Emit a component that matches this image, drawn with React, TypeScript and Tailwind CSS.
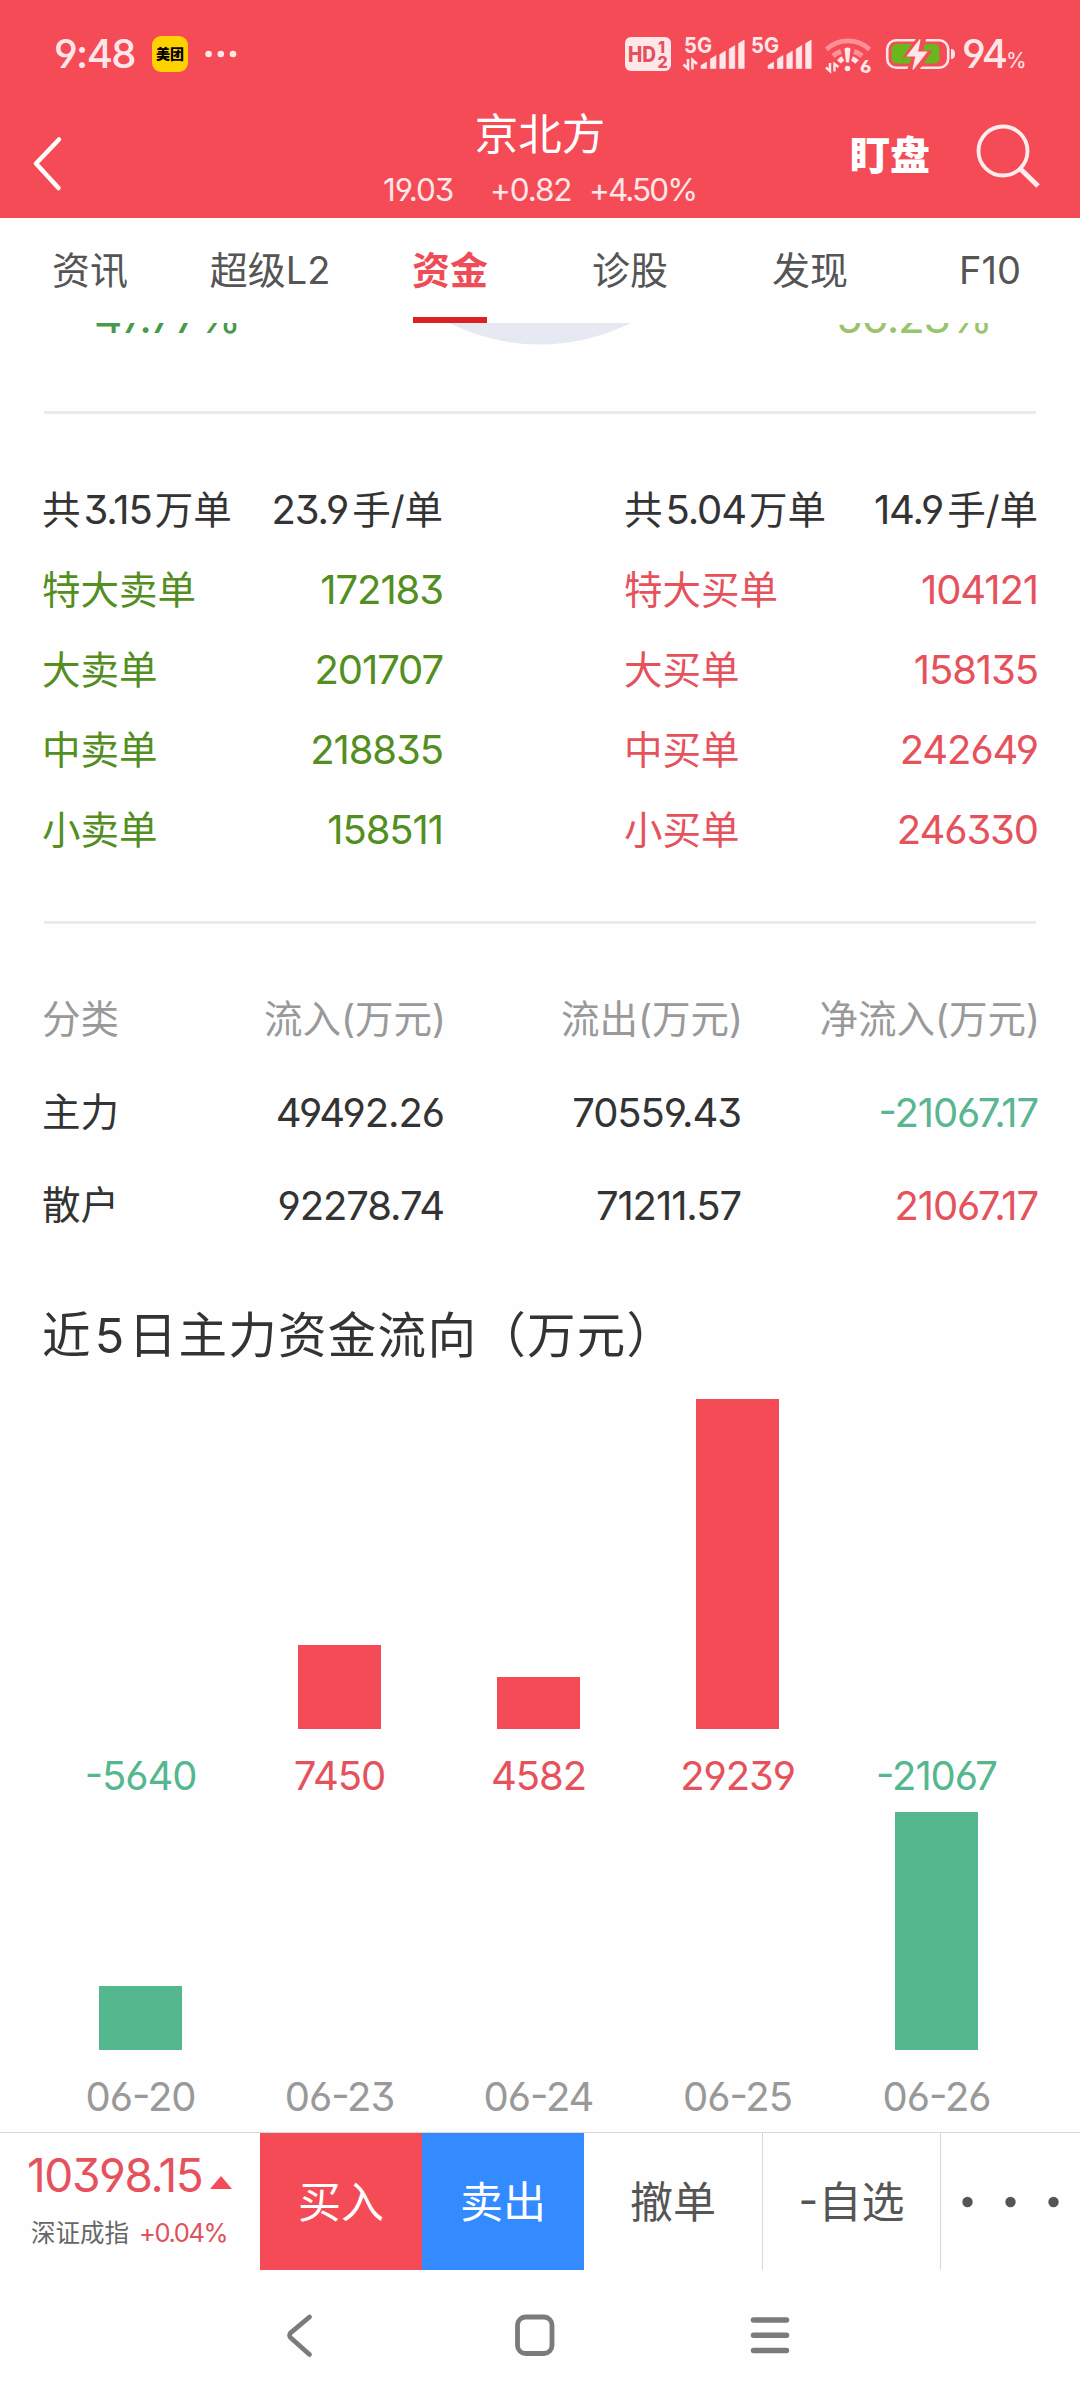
import { clsx } from 'clsx';

const TABS = ['资讯', '超级L2', '资金', '诊股', '发现', 'F10'];

const SELL_ORDERS = [
    { label: '特大卖单', value: '172183' },
    { label: '大卖单', value: '201707' },
    { label: '中卖单', value: '218835' },
    { label: '小卖单', value: '158511' },
];

const BUY_ORDERS = [
    { label: '特大买单', value: '104121' },
    { label: '大买单', value: '158135' },
    { label: '中买单', value: '242649' },
    { label: '小买单', value: '246330' },
];

const FLOW_ROWS = [
    { name: '主力', inflow: '49492.26', outflow: '70559.43', net: '-21067.17' },
    { name: '散户', inflow: '92278.74', outflow: '71211.57', net: '21067.17' },
];

const DAYS = [
    { date: '06-20', value: -5640 },
    { date: '06-23', value: 7450 },
    { date: '06-24', value: 4582 },
    { date: '06-25', value: 29239 },
    { date: '06-26', value: -21067 },
];

// Bar height in pixels per 万元
const BAR_SCALE = 330 / 29239;

function SignalBars({ x }: { x: number }) {
    const heights = [6.5, 13, 17.5, 23, 28.5];
    return (
        <g>
            {heights.map((h, i) => (
                <path
                    key={i}
                    d={`M${x + i * 9.4} 68.5v${-h + 3.5}l5.6 -3.5v${h}z`}
                    stroke="#ffe6e8"
                    strokeWidth="0.6"
                    strokeLinejoin="round"
                />
            ))}
        </g>
    );
}

function StatusBar() {
    return (
        <div className="flex h-[108px] items-center text-[#ffe6e8]">
            <span className="ml-[54px] w-[98px] text-[40px] font-medium leading-none tracking-[-0.04em]">9:48</span>
            <span className="flex h-9 w-9 items-center justify-center rounded-[9px] bg-[#ffd100] text-[14px] font-black leading-none text-black">
                美团
            </span>
            <svg className="ml-[16px]" width="34" height="10" fill="#ffe6e8">
                <circle cx="4.6" cy="5" r="3.3" />
                <circle cx="16.8" cy="5" r="3.3" />
                <circle cx="29" cy="5" r="3.3" />
            </svg>
            <svg className="ml-auto" width="338" height="108" viewBox="620 0 338 108" fill="#ffe6e8">
                <rect x="625" y="37" width="46" height="34" rx="6" />
                <g fill="#e4505b" fontWeight="800">
                    <text x="628" y="61.5" fontSize="21" textLength="28" lengthAdjust="spacingAndGlyphs">HD</text>
                    <text x="658" y="53" fontSize="16">1</text>
                    <text x="657.5" y="67.5" fontSize="16">2</text>
                </g>
                <text x="684" y="52.5" fontSize="22" fontWeight="700" textLength="28" lengthAdjust="spacingAndGlyphs">5G</text>
                <path d="M688 59v9.5l-4.5 -4M692.5 69.5v-9.500l4.5 4" fill="none" stroke="#ffe6e8" strokeWidth="2.6" />
                <SignalBars x={701} />
                <text x="751" y="52.5" fontSize="22" fontWeight="700" textLength="28" lengthAdjust="spacingAndGlyphs">5G</text>
                <SignalBars x={768} />
                <g fill="none">
                    <path d="M826.5 49.5a31 31 0 0 1 43 0" stroke="#ff9097" strokeWidth="4.6" />
                    <path d="M833 56a22 22 0 0 1 8 -4.5M854 51.5a22 22 0 0 1 8 4.5" stroke="#ff9097" strokeWidth="5" />
                    <path d="M839 62a14 14 0 0 1 4 -3.5M852 58.5a14 14 0 0 1 5 3.5" stroke="#ffe6e8" strokeWidth="5" />
                    <path d="M830 63v8l-4 -3.5M834.5 71.5v-7.5l4 3" stroke="#ffe6e8" strokeWidth="2.4" />
                </g>
                <path d="M844.5 48.5q3 -2 6 0l-1.5 14h-3z" />
                <circle cx="847.5" cy="68.5" r="2.8" />
                <text x="860" y="72.5" fontSize="18" fontWeight="800">6</text>
                <rect x="887.2" y="40.2" width="61" height="27.5" rx="9" fill="none" stroke="#ffe6e8" strokeWidth="2.6" />
                <path d="M951 49q4 0 4 5t-4 5z" />
                <rect x="891.5" y="44" width="48" height="19.5" rx="5" fill="#68b71c" />
                <path d="M918 36L902.500 57.500h9.500l-5.500 13.500h12L932.500 50.500h-9.500l4 -14.500z" fill="#f54b56" />
                <path d="M920 39.500L907.500 56h8.500l-3 13.500L926.500 52h-9z" stroke="#ffe6e8" strokeWidth="1.2" />
            </svg>
            <span className="ml-[4px] flex items-baseline leading-none">
                <span className="w-[44px] text-[40px] font-medium tracking-[-0.06em]">94</span>
                <span className="w-[74px] text-[21px]">%</span>
            </span>
        </div>
    );
}

function Header() {
    return (
        <div className="flex h-[110px] text-white">
            <div className="flex-1">
                <svg width="80" height="110" fill="none" stroke="white" strokeWidth="4.5" strokeLinecap="round" strokeLinejoin="round">
                    <path d="M59 31.5L36 55.5l22.5 24.5" />
                </svg>
            </div>
            <div className="flex w-[320px] flex-col items-center">
                <h1 className="h-[58px] text-[43.5px] leading-[53px]">京北方</h1>
                <div className="flex h-[48px] items-center self-stretch pl-[3px] text-[31.5px] leading-none tracking-[-0.035em] text-[#ffe6e8]">
                    <span className="w-[107px]">19.03</span>
                    <span className="w-[99px]">+0.82</span>
                    <span className="tracking-[-0.06em]">+4.50%</span>
                </div>
            </div>
            <div className="flex flex-1 justify-end">
                <span className="h-[98px] w-[120px] text-[40px] font-black leading-[96px]">盯盘</span>
                <svg width="110" height="110" viewBox="970 108 110 110" fill="none" stroke="#ffeced" strokeWidth="3.8">
                    <circle cx="1003" cy="151" r="24.5" />
                    <path d="M1020 168.5l18 17.5" strokeWidth="5" />
                </svg>
            </div>
        </div>
    );
}

function Tabs() {
    return (
        <nav className="flex h-[105px] bg-white">
            {TABS.map((tab) => {
                const active = tab === '资金';
                return (
                    <div key={tab} className="flex flex-1 flex-col items-center">
                        <span
                            className={clsx(
                                'h-[99px] text-[38px] leading-[104px]',
                                active ? 'font-bold text-[#ee4d58]' : 'text-[#555]'
                            )}
                        >
                            {tab}
                        </span>
                        {active && <span className="h-[6px] w-[74px] bg-[#dd2028]" />}
                    </div>
                );
            })}
        </nav>
    );
}

// Bottom edge of the ratio ring, the rest is scrolled under the tabs
function RatioStrip() {
    return (
        <div className="flex h-[88px] items-start justify-between overflow-hidden px-[94px]">
            <span className="-mt-[28px] w-[150px] text-[44px] leading-[44px] tracking-[-0.03em] text-[#479a4b]">47.77%</span>
            <svg width="200" height="24">
                <circle cx="100" cy="-180.5" r="202" fill="#e6e9f2" />
            </svg>
            <span className="-mt-[28px] w-[150px] text-[44px] leading-[44px] tracking-[-0.03em] text-[#98c470]">50.23%</span>
        </div>
    );
}

interface OrderPanelProps {
    total: string;
    average: string;
    rows: { label: string; value: string }[];
    className: string;
}

function OrderPanel({ total, average, rows, className }: OrderPanelProps) {
    return (
        <div className={className}>
            <div className="flex h-20 items-center justify-between text-[#333]">
                <span>共<Num className="mx-[3px]">{total}</Num>万单</span>
                <span><Num className="mr-[4px]">{average}</Num>手/单</span>
            </div>
            {rows.map((row) => (
                <div key={row.label} className="flex h-20 items-center justify-between">
                    <span>{row.label}</span>
                    <Num>{row.value}</Num>
                </div>
            ))}
        </div>
    );
}

function Num({ children, className }: { children: string; className?: string }) {
    return (
        <span className={clsx("text-[40px] tracking-[-0.027em] [font-feature-settings:'cv03','cv04','cv09','case']", className)}>
            {children}
        </span>
    );
}

function FlowTable() {
    return (
        <div className="grid grid-cols-[180px_222px_297px_297px] pt-[49px] text-right leading-[93px] text-[#333]">
            <div className="contents text-[#999]">
                <span className="text-left">分类</span>
                <span className="-mr-[2px]">流入(万元)</span>
                <span className="-mr-[2px]">流出(万元)</span>
                <span className="-mr-[2px]">净流入(万元)</span>
            </div>
            {FLOW_ROWS.map((row) => (
                <div key={row.name} className="contents">
                    <span className="text-left">{row.name}</span>
                    <Num>{row.inflow}</Num>
                    <Num>{row.outflow}</Num>
                    <Num className={row.net.startsWith('-') ? 'text-[#5ab592]' : 'text-[#e5525c]'}>{row.net}</Num>
                </div>
            ))}
        </div>
    );
}

function FlowChart() {
    return (
        <div className="-ml-px flex">
            {DAYS.map(({ date, value }) => {
                const height = Math.abs(value) * BAR_SCALE;
                return (
                    <div key={date} className="flex w-[199px] flex-col items-center">
                        <div className="flex h-[330px] items-end">
                            {value > 0 && <div className="w-[83px] bg-[#f54b56]" style={{ height }} />}
                        </div>
                        <div className={clsx('h-[83px] leading-[94px]', value > 0 ? 'text-[#e5525c]' : 'text-[#54b78e]')}>
                            <Num>{String(value)}</Num>
                        </div>
                        <div className="flex h-[238px] items-end">
                            {value < 0 && <div className="w-[83px] bg-[#54b78e]" style={{ height }} />}
                        </div>
                        <div className="h-[82px] leading-[94px] text-[#999]">
                            <Num>{date}</Num>
                        </div>
                    </div>
                );
            })}
        </div>
    );
}

function ActionBar() {
    return (
        <div className="flex h-[138px] border-t border-[#d8d8d8] text-center text-[43px] leading-[138px] text-[#555]">
            <div className="flex w-[260px] flex-col pl-[27px] pt-[17px] text-left">
                <div className="flex h-[50px] items-center text-[46px] leading-none tracking-[-0.03em] text-[#e5525c]">
                    <span className="w-[183px]">10398.15</span>
                    <svg width="22" height="13" className="mt-[14px]">
                        <path d="M0 13L11 0l11 13z" fill="#f54b56" />
                    </svg>
                </div>
                <div className="mt-[17px] flex h-[32px] items-center pl-[4px] text-[24.5px] leading-none text-[#666]">
                    <span className="w-[108px]">深证成指</span>
                    <span className="text-[25.5px] tracking-[-0.055em] text-[#dd525c]">+0.04%</span>
                </div>
            </div>
            <button className="w-[162px] bg-[#f54b56] text-white">买入</button>
            <button className="w-[162px] bg-[#338bff] text-white">卖出</button>
            <button className="w-[179px] border-r border-[#d8d8d8]">撤单</button>
            <button className="w-[178px] border-r border-[#d8d8d8] [font-feature-settings:'case']">-自选</button>
            <svg width="139" height="137" fill="#555">
                <circle cx="26.5" cy="69" r="5.2" />
                <circle cx="69.5" cy="69" r="5.2" />
                <circle cx="112.5" cy="69" r="5.2" />
            </svg>
        </div>
    );
}

function SystemNav() {
    return (
        <div className="flex h-[130px] justify-center gap-[187px] pr-[10px]">
            <svg width="48" height="130" fill="none" stroke="#7b7b7b" strokeWidth="4.8" strokeLinecap="round">
                <path d="M33.5 47L15.5 62q-4 3 0 6.500l18 16" />
            </svg>
            <svg width="48" height="130" fill="none" stroke="#7b7b7b" strokeWidth="4.8">
                <rect x="6.5" y="47" width="34.5" height="36.5" rx="8" />
            </svg>
            <svg width="48" height="130" fill="none" stroke="#7b7b7b" strokeWidth="5.5" strokeLinecap="round">
                <path d="M7.5 50h33M7.5 65.300h33M7.5 80.500h33" />
            </svg>
        </div>
    );
}

export default function App() {
    return (
        <div className="h-[2400px] w-[1080px] overflow-hidden bg-[#fefefe] font-[Inter,'Noto_Sans_CJK_SC',sans-serif] [font-feature-settings:'cv03','cv04','cv09']">
            <header className="bg-[#f54b56]">
                <StatusBar />
                <Header />
            </header>
            <Tabs />
            <RatioStrip />
            <main className="h-[1721px] px-[42px] text-[38.5px] leading-none">
                <div className="mx-[2px] h-[3px] bg-[#ebebeb]" />
                <div className="flex justify-between pt-[56px]">
                    <OrderPanel total="3.15" average="23.9" rows={SELL_ORDERS} className="w-[401px] text-[#538e20]" />
                    <OrderPanel total="5.04" average="14.9" rows={BUY_ORDERS} className="w-[414px] text-[#e5525c]" />
                </div>
                <div className="mx-[2px] mt-[51px] h-[3px] bg-[#ebebeb]" />
                <FlowTable />
                <h2 className="h-[147px] pt-[51px] text-[48.5px] leading-[66px] tracking-[1.3px] text-[#333]">
                    近<span className="mx-[3px]">5</span>日主力资金流向（万元）
                </h2>
                <FlowChart />
            </main>
            <ActionBar />
            <SystemNav />
        </div>
    );
}
